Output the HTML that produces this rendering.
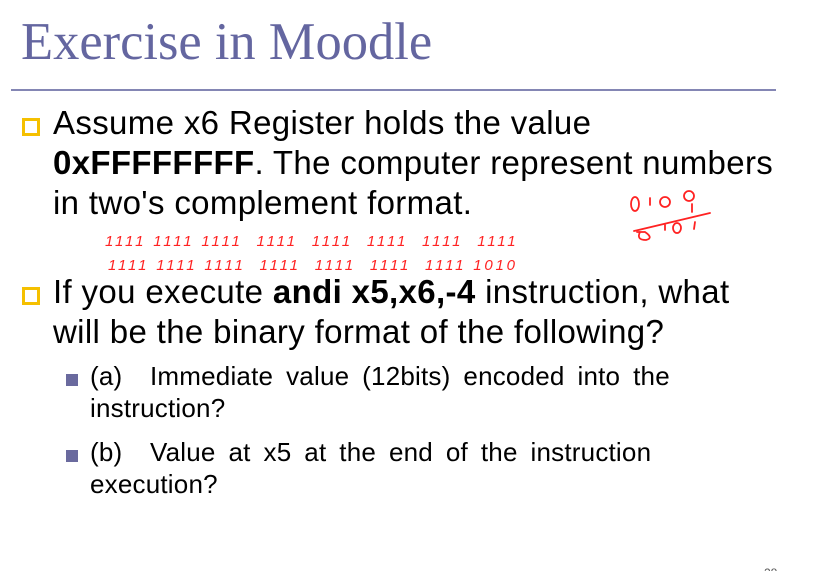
<!DOCTYPE html>
<html><head><style>
html,body{margin:0;padding:0;width:821px;height:571px;overflow:hidden;background:#fff;position:relative}
.t{position:absolute;white-space:nowrap;font-family:"Liberation Sans",Arial,sans-serif;color:#000;line-height:1}
.title{position:absolute;left:21px;top:16px;font-family:"Liberation Serif","Times New Roman",serif;font-size:52.5px;color:#6466a0;line-height:1;white-space:nowrap}
.hr{position:absolute;left:11px;top:89px;width:765px;height:2px;background:#8486b4}
.b1{position:absolute;width:12px;height:12px;border:3px solid #f5c000;background:#fff}
.b2{position:absolute;width:12px;height:12px;background:#6a6a9e}
.m{font-size:33px;letter-spacing:0.35px}
.s{font-size:26px;letter-spacing:0.2px}
.w{word-spacing:5.5px}
.g{display:inline-block;width:60px}
</style></head><body>
<div class="title">Exercise in Moodle</div>
<div class="hr"></div>

<div class="b1" style="left:22px;top:118px"></div>
<div class="t m" style="left:53px;top:106px">Assume x6 Register holds the value</div>
<div class="t m" style="left:53px;top:146px"><b>0xFFFFFFFF</b>. The computer represent numbers</div>
<div class="t m" style="left:53px;top:186px">in two's complement format.</div>

<div class="b1" style="left:22px;top:287px"></div>
<div class="t m" style="left:53px;top:275px">If you execute <b>andi x5,x6,-4</b> instruction, what</div>
<div class="t m" style="left:53px;top:315px">will be the binary format of the following?</div>

<div class="b2" style="left:66px;top:374px"></div>
<div class="t s" style="left:90px;top:363px"><span class="g">(a)</span><span class="w">Immediate value (12bits) encoded into the</span></div>
<div class="t s" style="left:90px;top:395px">instruction?</div>
<div class="b2" style="left:66px;top:450px"></div>
<div class="t s" style="left:90px;top:439px"><span class="g">(b)</span><span class="w">Value at x5 at the end of the instruction</span></div>
<div class="t s" style="left:90px;top:471px">execution?</div>

<svg style="position:absolute;left:0;top:0" width="821" height="571">
<g fill="#f22" font-family="Liberation Sans,sans-serif" font-style="italic" font-size="15">
<text x="105" y="246" letter-spacing="2.8">1111 1111 1111 &#160;1111 &#160;1111 &#160;1111 &#160;1111 &#160;1111</text>
<text x="108" y="270" letter-spacing="2.8">1111 1111 1111 &#160;1111 &#160;1111 &#160;1111 &#160;1111 1010</text>
</g>
<g fill="none" stroke="#f22" stroke-width="1.8" stroke-linecap="round">
<ellipse cx="635" cy="204" rx="4" ry="7"/>
<line x1="650" y1="198" x2="650" y2="205"/>
<ellipse cx="665" cy="202" rx="5" ry="5"/>
<ellipse cx="689" cy="196" rx="5" ry="5"/>
<line x1="692" y1="204" x2="692" y2="212"/>
<line x1="634" y1="231" x2="710" y2="213"/>
<path d="M640 232 q-4 8 6 8 q8 -2 -1 -8 M637 232 h8"/>
<line x1="665" y1="225" x2="665" y2="230"/>
<ellipse cx="677" cy="228" rx="4" ry="5"/>
<line x1="695" y1="222" x2="694" y2="229"/>
</g>
<text x="764" y="577" font-family="Liberation Sans,sans-serif" font-size="12" fill="#555">28</text>
</svg>
</body></html>
